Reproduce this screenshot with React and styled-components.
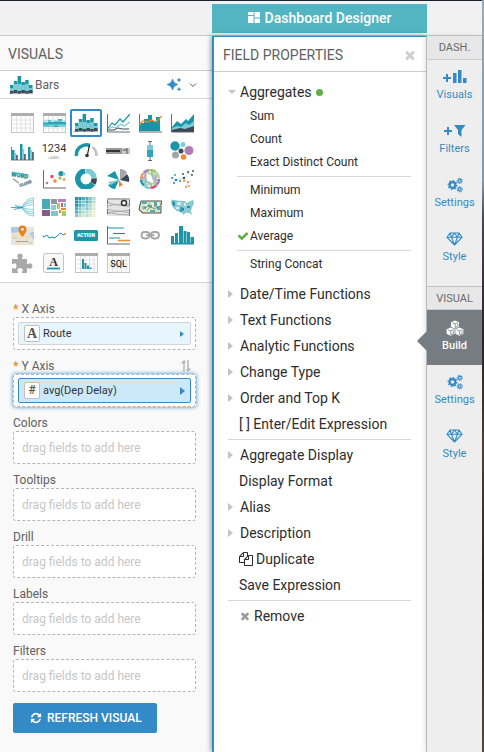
import React from "react";
import styled, { createGlobalStyle, css } from "styled-components";

const c = {
  blue: "#338ac6",
  teal: "#1b95a8",
  light: "#7ccbd5",
  dark: "#3c4853",
  orange: "#f08a24",
  grey: "#a5a5a5",
};

const GlobalStyle = createGlobalStyle`
  * { box-sizing: border-box; }
  body { margin: 0; font-family: Roboto, sans-serif; font-size: 14px; color: #333; background: #f9f9f9; }
  button { font: inherit; color: inherit; background: none; border: 0; padding: 0; cursor: pointer; }
  h2, h3, ul { margin: 0; padding: 0; font-weight: 400; list-style: none; }
  svg { display: block; flex: none; }
`;

const Page = styled.div`
  display: flex;
  min-height: 100vh;
`;
const Main = styled.div`
  flex: 1;
  min-width: 0;
  display: flex;
  flex-direction: column;
  border-top: 1px solid #1d2230;
`;
const PhotoEdge = styled.div`
  width: 2px;
  background: linear-gradient(#9da9ba, #8d9bb0 24%, #4b4a50 29%, #29262a 45%, #4d4139 60%, #2d2727 78%, #544a43);
`;
const TopBar = styled.header`
  display: flex;
  padding: 3px 55px 2px 212px;
  background: #f1f1f1;
  border-bottom: 1px solid #c7c7c7;
`;
const DesignerTab = styled.button`
  flex: 1;
  height: 29px;
  padding-bottom: 2px;
  display: flex;
  align-items: center;
  justify-content: center;
  gap: 4px;
  background: #52b5c1;
  color: #fff;
  font-size: 14px;
  font-weight: 500;
`;
const Columns = styled.div`
  flex: 1;
  display: flex;
`;

const Visuals = styled.section`
  width: 212px;
  background: #f9f9f9;
`;
const VisualsTitle = styled.h2`
  padding: 2px 8px 0;
  font-size: 14px;
  line-height: 32px;
  color: #606060;
  border-bottom: 1px solid #cdcdcd;
`;
const TypePicker = styled.button`
  width: 100%;
  height: 28px;
  padding: 0 15px 0 9px;
  display: flex;
  align-items: center;
  gap: 2px;
  background: #fff;
  border-bottom: 1px solid #d5d5d5;
  color: #606060;
  font-size: 12px;
`;
const TypeName = styled.span`
  flex: 1;
  text-align: left;
`;
const PickerIcons = styled.span`
  display: flex;
  align-items: center;
  gap: 7px;
`;
const TypeGrid = styled.div`
  display: grid;
  grid-template-columns: repeat(auto-fill, 32px);
  grid-auto-rows: 28px;
  padding: 10px 6px 5px;
  background: #fff;
  border-bottom: 1px solid #d5d5d5;
`;
const TypeButton = styled.button`
  display: flex;
  align-items: center;
  justify-content: center;
  ${(p) =>
    p.$selected &&
    css`
      box-shadow: inset 0 0 0 2px ${c.blue};
      border-radius: 2px;
    `}
`;

const Shelves = styled.div`
  display: flex;
  flex-direction: column;
  align-items: stretch;
  gap: 7px;
  padding: 17px 16px 18px 13px;
`;
const ShelfLabel = styled.h3`
  display: flex;
  align-items: center;
  gap: 3px;
  height: 17px;
  font-size: 12px;
  color: #606060;
`;
const Required = styled.span`
  color: ${c.orange};
  font-weight: 700;
`;
const SwapButton = styled.button`
  margin-left: auto;
  margin-right: 5px;
`;
const DropZone = styled.div`
  height: 33px;
  padding: 4px;
  display: flex;
  align-items: center;
  background: #fff;
  border: 1px dashed #b4b4b4;
  border-radius: 3px;
  font-size: 12px;
  color: #c6c6c6;
  ${(p) => p.$active && css`box-shadow: 0 0 4px ${c.blue};`}
`;
const Hint = styled.span`
  padding-left: 4px;
`;
const FieldChip = styled.button`
  flex: 1;
  height: ${(p) => (p.$active ? 25 : 23)}px;
  padding: 0 5px;
  display: flex;
  align-items: center;
  gap: 3px;
  text-align: left;
  font-size: 11px;
  color: #333;
  border: 1px solid ${(p) => (p.$active ? c.blue : "#cfd5d9")};
  border-radius: 2px;
  background: ${(p) => (p.$active ? "#cce9fa" : "#e7f5fe")};
`;
const FieldType = styled.span`
  width: 16px;
  height: 17px;
  border: 1px solid #bfbfbf;
  border-radius: 2px;
  background: #fff;
  color: #555;
  text-align: center;
  font: ${(p) => (p.$serif ? '700 14px/15px "Liberation Serif", serif' : "500 12px/15px Roboto, sans-serif")};
`;
const FieldName = styled.span`
  flex: 1;
`;
const RefreshButton = styled.button`
  align-self: flex-start;
  height: 30px;
  margin-top: 4px;
  padding: 0 15px 0 17px;
  display: flex;
  align-items: center;
  gap: 5px;
  border-radius: 2px;
  background: ${c.blue};
  color: #fff;
  font-size: 12px;
  font-weight: 500;
`;

const Properties = styled.section`
  flex: 1;
  min-width: 0;
  position: relative;
  background: #fff;
  border: solid ${c.blue};
  border-width: 1px 0 0 2px;
  box-shadow: -1px 0 5px rgba(0, 0, 0, 0.4);
`;
const PropertiesHeader = styled.header`
  height: 35px;
  padding: 2px 9px 0;
  display: flex;
  align-items: center;
  justify-content: space-between;
  border-bottom: 1px solid #cdcdcd;
  color: #606060;
`;
const PropertiesTitle = styled.h2`
  font-size: 14px;
`;
const PropertyList = styled.div`
  display: flex;
  flex-direction: column;
  padding: 7px 15px 0 14px;
`;
const PropertyRow = styled.button`
  height: 26px;
  padding-left: ${(p) => (p.$flush ? 11 : 0)}px;
  display: flex;
  align-items: center;
  gap: ${(p) => p.$gap || 4}px;
  text-align: left;
  font-size: 14px;
  color: #2d2d2d;
`;
const ArrowSlot = styled.span`
  width: 8px;
`;
const Dot = styled.span`
  width: 7px;
  height: 7px;
  border-radius: 50%;
  background: #62ac4a;
`;
const OptionGroup = styled.div`
  display: flex;
  flex-direction: column;
  padding-left: 9px;
  margin-bottom: 5px;
`;
const OptionRow = styled.button`
  height: 23px;
  padding-bottom: 2px;
  display: flex;
  align-items: center;
  gap: 2px;
  text-align: left;
  font-size: 12px;
  color: #2d2d2d;
`;
const CheckSlot = styled.span`
  width: 11px;
`;
const Divider = styled.hr`
  width: 100%;
  height: 1px;
  margin: 2px 0;
  border: 0;
  background: #d6d6d6;
`;

const Rail = styled.nav`
  width: 56px;
  border-left: 1px solid #b9b9b9;
  background: #eeeeee;
  box-shadow: -1px 0 5px rgba(0, 0, 0, 0.12);
  position: relative;
`;
const RailTitle = styled.h2`
  height: 24px;
  margin-top: ${(p) => (p.$spaced ? 10 : 0)}px;
  border-top: ${(p) => (p.$spaced ? "1px solid #c3c3c3" : "0")};
  border-bottom: 1px solid #cccccc;
  background: #e7e7e7;
  color: #6b6b6b;
  font-size: 11px;
  line-height: 23px;
  text-align: center;
`;
const RailButton = styled.button`
  width: 100%;
  height: ${(p) => (p.$selected ? 55 : 54)}px;
  padding-top: ${(p) => (p.$selected ? 10 : 9)}px;
  position: relative;
  display: flex;
  flex-direction: column;
  align-items: center;
  gap: 1px;
  font-size: 11px;
  line-height: 17px;
  color: ${c.blue};
  ${(p) =>
    p.$selected &&
    css`
      color: #fff;
      font-weight: 500;
      background: #757d83;
      &::before {
        content: "";
        position: absolute;
        right: 100%;
        top: 21px;
        border: solid transparent;
        border-width: 10px 10px 10px 0;
        border-right-color: #757d83;
      }
    `}
`;

/* ---------- Interface icons ---------- */

const glyphs = {
  times: "M1490 1322q0 40-28 68l-136 136q-28 28-68 28t-68-28l-294-294-294 294q-28 28-68 28t-68-28l-136-136q-28-28-28-68t28-68l294-294-294-294q-28-28-28-68t28-68l136-136q28-28 68-28t68 28l294 294 294-294q28-28 68-28t68 28l136 136q28 28 28 68t-28 68l-294 294 294 294q28 28 28 68z",
  check: "M1671 566q0 40-28 68l-724 724-136 136q-28 28-68 28t-68-28l-136-136-362-362q-28-28-28-68t28-68l136-136q28-28 68-28t68 28l294 295 656-657q28-28 68-28t68 28l136 136q28 28 28 68z",
  refresh: "M1639 1056q0 5-1 7-64 268-268 434.5t-478 166.5q-146 0-282.5-55t-243.5-157l-129 129q-19 19-45 19t-45-19-19-45v-448q0-26 19-45t45-19h448q26 0 45 19t19 45-19 45l-137 137q71 66 161 102t187 36q134 0 250-65t186-179q11-17 53-117 8-23 30-23h192q13 0 22.5 9.5t9.5 22.5zm25-800v448q0 26-19 45t-45 19h-448q-26 0-45-19t-19-45 19-45l138-138q-148-137-349-137-134 0-250 65t-186 179q-11 17-53 117-8 23-30 23h-199q-13 0-22.5-9.5t-9.5-22.5v-7q65-268 270-434.5t480-166.5q146 0 284 55.5t245 156.5l130-129q19-19 45-19t45 19 19 45z",
  copy: "M1696 384q40 0 68 28t28 68v1216q0 40-28 68t-68 28h-960q-40 0-68-28t-28-68v-288h-544q-40 0-68-28t-28-68v-672q0-40 20-88t48-76l408-408q28-28 76-48t88-20h416q40 0 68 28t28 68v328q68-40 128-40h416zm-544 213l-299 299h299v-299zm-640-384l-299 299h299v-299zm196 647l316-316v-416h-384v416q0 40-28 68t-68 28h-416v640h512v-256q0-40 20-88t48-76zm956 804v-1152h-384v416q0 40-28 68t-68 28h-416v640h896z",
};
const Glyph = ({ name, size, color = "currentColor" }) => (
  <svg width={size} height={size} viewBox="0 0 1792 1792" fill={color} aria-hidden="true">
    <path d={glyphs[name]} />
  </svg>
);
const Caret = ({ open }) => (
  <svg width="8" height="10" viewBox="0 0 8 10" fill="#c4c4c4" aria-hidden="true">
    <path d={open ? "M0 3h8L4 7z" : "M0 1l5 4-5 4z"} />
  </svg>
);
const ChipCaret = ({ active }) => (
  <svg width="5" height="10" viewBox="0 0 5 10" fill={c.blue} aria-hidden="true">
    <path d={active ? "M0 1l5 4-5 4z" : "M0 2l4 3-4 3z"} />
  </svg>
);
const DesignerIcon = () => (
  <svg width="13" height="13" viewBox="0 0 13 13" fill="#fff" aria-hidden="true">
    <path d="M0 1h5.500v3H0zM0 5h5.500v7H0zM6.500 1h5.500v5.500H6.500zM6.500 7.500h5.500V12H6.500z" />
  </svg>
);
const Sparkles = () => (
  <svg width="15" height="15" viewBox="0 0 15 15" fill={c.blue} aria-hidden="true">
    <path d="M5.500 2Q6.500 6.500 11 7.500 6.500 8.500 5.500 13 4.500 8.500 0 7.500 4.500 6.500 5.500 2z" stroke={c.blue} strokeWidth=".6" />
    <path d="M12 .4l.8 1.800 1.800.8-1.800.8-.8 1.800-.8-1.800-1.800-.8 1.800-.8zM12 9.800l.7 1.700 1.700.7-1.700.7-.7 1.700-.7-1.700-1.700-.7 1.700-.7z" />
  </svg>
);
const Chevron = () => (
  <svg width="8" height="6" viewBox="0 0 8 6" fill="none" stroke="#555" aria-hidden="true">
    <path d="M1 1.500l3 3 3-3" />
  </svg>
);
const SwapIcon = () => (
  <svg width="10" height="14" viewBox="0 0 10 14" fill="none" stroke="#b5b5b5" strokeWidth="1.500" aria-hidden="true">
    <path d="M3 13V2M.7 4.500L3 2l1.500 1.500M7 1v11M9.400 9.500L7 12l-1.500-1.500" />
  </svg>
);

const RailSvg = ({ children, w = 24 }) => (
  <svg width={w} height="16" viewBox={`0 0 ${w} 16`} fill="currentColor" aria-hidden="true">
    {children}
  </svg>
);
const Gear = ({ x, y, r, w }) => (
  <g fill="none" stroke="currentColor">
    <circle cx={x} cy={y} r={r} strokeWidth={w} />
    <circle cx={x} cy={y} r={r + w / 2 + 0.4} strokeWidth="1.200" pathLength="16" strokeDasharray="1 1" />
  </g>
);
const Cube = ({ x, y }) => (
  <g transform={`translate(${x} ${y})`}>
    <path d="M4 0l4 1.700v4.600L4 8.200 0 6.300V1.700z" />
    <path d="M1.200 2.200L4 3.400l2.800-1.200M4.200 3.500v3.800l2.600-1.300V3.200" fill="none" stroke="#757d83" strokeWidth=".8" />
  </g>
);
const railIcons = {
  visuals: (
    <RailSvg>
      <path d="M0 8h3V5h2v3h3v2H5v3H3v-3H0z" />
      <path d="M10 4h3.500v10H10zM15 1h3.500v13H15zM20 9h3.500v5H20z" />
    </RailSvg>
  ),
  filters: (
    <RailSvg w={22}>
      <path d="M0 7h3V4h2v3h3v2H5v3H3V9H0z" />
      <path d="M10 2h11.500L17.500 7v7L14 11V7z" />
    </RailSvg>
  ),
  settings: (
    <RailSvg w={16}>
      <Gear x={5.5} y={8} r={2.9} w={2.2} />
      <Gear x={12.7} y={3.8} r={1.5} w={1.2} />
      <Gear x={12.7} y={12.3} r={1.5} w={1.2} />
    </RailSvg>
  ),
  style: (
    <RailSvg w={17}>
      <path
        d="M4 2h9l3 4.300L8.500 14 1 6.300zM1 6.300h15M4 2l1.500 4.300 3 7.700 3-7.700L13 2M5.500 6.300L8.500 2l3 4.300"
        fill="none"
        stroke="currentColor"
        strokeWidth="1.100"
        strokeLinejoin="round"
      />
    </RailSvg>
  ),
  build: (
    <RailSvg w={18}>
      <Cube x={5} y={0.5} />
      <Cube x={0.6} y={7.5} />
      <Cube x={9.4} y={7.5} />
    </RailSvg>
  ),
};

/* ---------- Chart type thumbnails, each on a 24x20 canvas ---------- */

const Axis = () => <path d="M1.500 1v18H24" fill="none" stroke="#555c63" strokeWidth=".9" />;
const TableFrame = () => (
  <>
    <rect x="1.500" y=".5" width="22" height="19" fill="#fff" stroke="#c4c4c4" />
    <path d="M1 0h23v3H1z" fill="#adadad" />
    <path d="M1 7h23M1 11h23M1 15h23M6.500 3v17M11 3v17M15.500 3v17M20 3v17" stroke="#dcdcdc" strokeWidth=".8" />
  </>
);
const Bars = () => (
  <>
    {[9, 5, 0, 6, 4, 9].map((y, i) => (
      <g key={i} transform={`translate(${1 + i * 3.8} 0)`}>
        <path d={`M0 ${y + 1}h3.500V18H0z`} fill={c.teal} />
        <path d={`M0 ${Math.max(y + 4, 9)}h3.500V18H0z`} fill={c.light} />
        <path d={`M0 ${i % 2 ? 15 : 16}h3.500v3H0z`} fill={c.dark} />
      </g>
    ))}
    <path d="M0 18.600h24" stroke="#8b9298" strokeWidth=".8" />
  </>
);
const polar = (r, deg) => {
  const a = ((deg - 90) * Math.PI) / 180;
  return `${(12 + r * Math.cos(a)).toFixed(2)} ${(10 + r * Math.sin(a)).toFixed(2)}`;
};
const arc = (r, a, b) => `M${polar(r, a)}A${r} ${r} 0 ${b - a > 180 ? 1 : 0} 1 ${polar(r, b)}`;
const dots = (list) => list.map(([x, y, r, fill], i) => <circle key={i} cx={x} cy={y} r={r} fill={fill} />);

const chartTypes = [
  ["Table", <TableFrame />],
  [
    "Cross tab",
    <>
      <TableFrame />
      <path d="M1 9h23v5H1z" fill={c.light} />
      <path d="M6 7h3v2h3V8h4V6h4v3h4v3h-8v2h-4v-2H7v1H1v-3h5z" fill={c.teal} opacity=".75" />
      <path d="M1 8h23M1 12h23" stroke="#73dbe6" />
    </>,
  ],
  ["Bars", <Bars />],
  [
    "Lines",
    <>
      <Axis />
      <g fill="none">
        <path d="M2 15l4-5 3 2 5-6 3 3 7-8" stroke={c.teal} strokeWidth="1.200" />
        <path d="M2 16l4-2 4 1 5-4 3 2 6-4" stroke={c.light} strokeWidth="1.200" />
        <path d="M2 17h6l4-2 4 1h7" stroke={c.dark} />
      </g>
    </>,
  ],
  [
    "Combo",
    <>
      <path d="M2 10h4v8H2zM6 6h4v12H6zM10 2h4v16h-4zM14 8h4v10h-4zM18 4h4v14h-4z" fill={c.teal} />
      <path d="M6 10v8M10 6v12M14 8v10M18 8v10" stroke="#167d8f" strokeWidth=".5" />
      <Axis />
      <path d="M1 12l4-4 4 1 5-2 4 2 6-6" fill="none" stroke={c.orange} strokeWidth="1.200" />
    </>,
  ],
  [
    "Area",
    <>
      <path d="M2 14l5-6 4 3 5-5 2 2 6-7v17H2z" fill={c.teal} />
      <path d="M2 15l5-2 4 1 5-4 3 2 5-4v10H2z" fill={c.light} />
      <path d="M2 17l8-2 5 1 9-3v6H2z" fill={c.dark} />
      <Axis />
    </>,
  ],
  [
    "Grouped bars",
    <>
      <path d="M2 9h2.500v10H2zM10 3h2.500v16H10zM18 6h2.500v13H18z" fill={c.teal} />
      <path d="M4.500 12h1.700v7H4.500zM12.500 8h1.700v11h-1.700zM20.500 9h1.700v10h-1.700z" fill={c.light} />
      <path d="M6.200 14h1.500v5H6.200zM14.200 13h1.500v6h-1.500zM22.200 11h1.500v8h-1.500z" fill={c.dark} />
      <path d="M1 19h23M1.500 6v13" stroke="#555c63" strokeWidth=".8" />
    </>,
  ],
  [
    "KPI",
    <>
      <text x="12" y="11" textAnchor="middle" fontSize="11" fill="#333">1234</text>
      <text x="12" y="18" textAnchor="middle" fontSize="4" fill="#999">LABEL</text>
    </>,
  ],
  [
    "Gauge",
    <>
      <path d="M2.500 15A10 10 0 0 1 16 4.500" fill="none" stroke={c.teal} strokeWidth="3.500" />
      <path d="M18.500 6Q22.500 9 22.500 15" fill="none" stroke="#c4c4c4" strokeWidth="2.800" />
      <path d="M15.500 4l-2.300 11" stroke="#222" strokeWidth="1.200" />
      <circle cx="13" cy="14.500" r="1.800" fill="#333" />
    </>,
  ],
  [
    "Bullet",
    <>
      <path d="M0 7h24v6H0z" fill="#c9c9c9" />
      <path d="M0 7h16v6H0z" fill="#999" />
      <path d="M0 9h14v2H0z" fill="#333" />
      <path d="M17 9h4M21 7v6" stroke="#555" />
    </>,
  ],
  [
    "Box plot",
    <>
      <path d="M12 0v20M10 .5h4M10 19.500h4" stroke="#666" />
      <path d="M9 4h6v5H9z" fill={c.light} />
      <path d="M9 9h6v7H9z" fill="#2ba7b6" />
    </>,
  ],
  ["Packed bubbles", dots([[5, 5, 4.7, c.teal], [13, 3.5, 2.5, c.light], [19, 9.5, 4.5, "#b27bb8"], [5.5, 14, 3.5, "#a0a6aa"], [11, 10, 2.5, c.dark], [13.5, 16, 2.8, c.orange]])],
  [
    "Word cloud",
    <g fontWeight="900">
      <text x="1" y="7" fontSize="6" fill={c.teal} stroke={c.teal} strokeWidth=".3" transform="rotate(9 1 7)">WORD</text>
      <text x="10" y="18" fontSize="4" fill="#6b8792" stroke="#6b8792" strokeWidth=".3" transform="rotate(-20 10 18)">CLOUD</text>
      <path d="M3 10l6 4" stroke="#999" strokeWidth="1.500" />
    </g>,
  ],
  ["Scatter", <><Axis />{dots([[5, 14, 1.3, "#b27bb8"], [10, 7.5, 1.8, "#e2516a"], [13, 12, 1.7, c.orange], [19, 4.5, 2.6, c.teal], [18, 9, 1.7, "#9dc65c"], [22, 10.5, 1.2, c.orange], [22, 5, 1.5, c.light]])}</>],
  [
    "Donut",
    <g fill="none" strokeWidth="5.500">
      <path d={arc(8.2, 125, 355)} stroke={c.teal} />
      <path d={arc(8.2, 0, 83)} stroke={c.light} />
      <path d={arc(8.2, 86, 122)} stroke={c.dark} />
    </g>,
  ],
  [
    "Radial",
    <>
      <path d="M13 11L1 7l8-5z" fill={c.teal} />
      <path d="M13 11L9 20q-4 0-7-4z" fill={c.teal} />
      <path d="M14 11V0q5 0 7 4z" fill="#a0a6aa" />
      <path d="M14 11l7-6q3 4 2 8z" fill={c.dark} />
      <path d="M13 11l4 5-4 2z" fill={c.orange} />
      <path d="M13 11L5 16l-3-3z" fill={c.light} />
    </>,
  ],
  [
    "Chord",
    <>
      <path d="M6 4q4 6 0 12M9 2q3 5 9 3M18 5q-5 5 0 10M8 17q5-5 10-1" fill="none" stroke="#bcd59a" strokeWidth="2" />
      <path d="M4 8q6 2 3 8M14 2q-1 9 6 9M5 12q7 0 9 6" fill="none" stroke="#8fc3cc" strokeWidth="2" />
      <path d="M8 3q-1 7-4 7M19 6q-3 4-1 9" fill="none" stroke="#c5a5bd" strokeWidth="2" />
      <g fill="none" strokeWidth="2.500">
        {["#9dc65c", "#bcd59a", "#9b7fb5", "#e2516a", c.light, c.teal, "#e69a6a", "#a58cba"].map((s, i) => (
          <path key={i} d={arc(9, i * 45, i * 45 + 42)} stroke={s} />
        ))}
      </g>
    </>,
  ],
  [
    "Network",
    <>
      <path d="M6 11l8-2M14 9l4-5M14 9l4 5-2 4M2 8l4 3-3 2M18 4l4 2M18 14l3-2" stroke="#bbb" strokeWidth=".6" fill="none" />
      {dots([[2, 9, 1, c.teal], [4, 14, 1, c.teal], [6, 11, 1.3, c.teal], [10, 12, 1, c.teal], [5, 6, 0.9, c.teal], [14, 9, 1.2, c.dark], [13, 5, 0.9, c.dark], [18, 3, 1, c.dark], [23, 2, 0.9, c.dark], [22, 6, 0.9, c.dark], [14, 12, 1.1, c.orange], [18, 13, 1, c.orange], [16, 18, 1, c.orange], [19, 17, 0.9, c.orange]])}
    </>,
  ],
  [
    "Dendrogram",
    <g fill="none">
      {[1, 3, 5, 7.5, 12.5, 15, 17, 19].map((y) => (
        <path key={y} d={`M12 10.500Q16 ${y} 24 ${y}`} stroke={c.light} strokeWidth=".9" />
      ))}
      <path d="M1 10.500h12M5 8.500l8 2-9 2" stroke={c.teal} strokeWidth=".8" />
      <path d="M23.500 1v18" stroke="#a0c7cd" strokeWidth=".8" />
    </g>,
  ],
  [
    "Treemap",
    <>
      <path d="M0 2h8v10H0z" fill="#4aa9b7" />
      <path d="M9 2h6v5H9z" fill="#8f969d" />
      <path d="M16 2h8v3h-8z" fill="#b681bd" />
      <path d="M0 13h8v6H0z" fill="#805d8a" />
      <path d="M9 8h5v5H9z" fill="#8ecbd3" />
      <path d="M15 6h3v6h-3zM20 14h4v5h-4z" fill="#abc96c" />
      <path d="M19 6h2v4h-2z" fill="#e2516a" />
      <path d="M9 14h7v5H9zM22 6h2v4h-2z" fill="#7ec6cf" />
      <path d="M19 11h5v2h-5zM17 13h2v3h-2z" fill={c.orange} />
    </>,
  ],
  [
    "Heatmap",
    <>
      {Array.from({ length: 36 }, (_, i) => {
        const x = i % 6;
        const y = Math.floor(i / 6);
        const shades = ["#1b95a8", "#4ab0ba", "#84c8cb", "#b3dcd2", "#d9ebcb", "#eef0cd"];
        const shade = Math.min(5, Math.max(0, Math.floor((x + y) / 2 + ((i * 7) % 3) / 2 - 0.5)));
        return <rect key={i} x={1 + x * 3.5} y={y * 3.4} width="3.100" height="3" fill={shades[shade]} />;
      })}
    </>,
  ],
  [
    "Flow",
    <>
      <path d="M1 1h23v18H1z" fill="#e4e4e4" />
      <path d="M1 1h23v2H1z" fill="#b4b4b4" />
      <path d="M1 5q8 4 23 3M1 9q10-3 23 1M1 12q10 4 23 1M1 17q10-5 23-1M1 15q10 3 23 3" fill="none" stroke="#aaa" />
      <circle cx="18" cy="6" r="2.500" fill="#fff" stroke="#333" strokeWidth="1.500" />
      <path d="M1.500 3v4M1.500 12v5M23.500 3v6M23.500 12v7" stroke={c.teal} />
      <path d="M1.500 8v3" stroke={c.orange} />
    </>,
  ],
  [
    "Choropleth",
    <>
      <path d="M3 4h21v2h-1v10H4l-1-2-2-1 1-5z" fill="#d8e8ca" stroke="#222" strokeWidth=".8" />
      <path d="M4 5h5v2H4zM10 8h4v2h-4zM16 5h3v4h-3zM12 13h5v2h-5zM4 12l4-3v3zM19 9h3v4h-3z" fill="#55aab2" />
      <path d="M7 7h3v3H7zM14 6h2v4h-2zM19 5h2v3h-2zM10 12h2v3h-2z" fill="#f6f1c7" />
      <path d="M4 10h5l3-4M9 14l3-4 6 2M16 9l4 2" fill="none" stroke="#2f5a5e" strokeWidth=".6" />
    </>,
  ],
  [
    "US map",
    <>
      <path d="M2 3l6 1 7 .5 2 2 3-2 3-1 .5 3-2 4-1 4 1 3-2-2-4 0-2 2-2-3-5-1-3-3-2-4z" fill="#8ccbd2" stroke="#5caab5" strokeWidth=".5" />
      <path d="M2 4l3 1v4L3 9zM10 10l4 1v3l-3-1zM17 9h3v2h-3zM9 13h3l-1 3z" fill={c.teal} />
      <path d="M7 5h4v3H7zM14 6h2v3h-2zM6 10h3v2H6z" fill="#d4ecef" />
    </>,
  ],
  [
    "Map",
    <>
      <path d="M1 2h23v18H1z" fill="#e9e4dc" />
      <path d="M1 2h13l-5 5-8 1zM19 8l5-1v8z" fill="#a9c9ee" />
      <path d="M1 12l8-3 10 3 5-2M8 20l3-12M15 20l3-9" stroke="#f8d681" strokeWidth=".8" fill="none" />
      <path d="M3 12h4v2H3zM19 17h3v2h-3z" fill="#c7dfb3" />
      <path d="M12.500 12C9.500 8 8.500 7 8.500 4.500a4 4 0 0 1 8 0C16.500 7 15.500 8 12.500 12z" fill="#ef7f1a" />
      <circle cx="12.500" cy="4.300" r="1.400" fill="#fff" />
      <text x="12" y="17" textAnchor="middle" fontSize="2" fill="#333">San Francisco</text>
    </>,
  ],
  [
    "Sparkline",
    <>
      <path d="M2 12l3-2 2 3 3-1 3 1 3-3 3-2 2 2 2-1" fill="none" stroke={c.teal} />
      {dots([[1.5, 11.5, 0.9, "#62ac4a"], [23, 9, 0.9, c.orange]])}
    </>,
  ],
  [
    "Action",
    <>
      <rect y="5" width="24" height="11" rx="1.500" fill="#1d96a6" />
      <text x="12" y="12" textAnchor="middle" fontSize="5" fontWeight="900" fill="#fff">ACTION</text>
    </>,
  ],
  [
    "Gantt",
    <>
      <Axis />
      <path d="M2 3h16M3 13h11" stroke={c.teal} strokeWidth="1.100" />
      <path d="M7 8.500h12" stroke="#55737b" strokeWidth="1.100" />
      <path d="M12 15.500h12" stroke={c.orange} strokeWidth="1.500" />
    </>,
  ],
  [
    "Link",
    <g fill="none" stroke="#a5a5a5" strokeWidth="1.800">
      <rect x="3.500" y="7" width="8" height="6.500" rx="3.200" />
      <rect x="13" y="7" width="8" height="6.500" rx="3.200" />
      <path d="M8 10.200h8.500" />
    </g>,
  ],
  ["Histogram", <path d="M1 11h3v8H1zM5 8h3v11H5zM9 1h4v18H9zM13.500 6h3v13h-3zM17 7h3v12h-3zM20.500 12h3.500v7h-3.500zM1 18h23v1.500H1z" fill={c.teal} />],
  [
    "Extension",
    <path
      d="M2 6h5.500c1 0 .5-1.200 0-2C6.800 2.500 8 .5 10 .5s3.200 2 2.500 3.500c-.5.800-1 2 0 2H17v4.500c0 1 1.200.5 2 0 1.500-.7 3.500.500 3.500 2.500s-2 3.200-3.500 2.500c-.8-.5-2-1-2 0V20h-4.500c-1 0-.5-1.200 0-2 .7-1.500-.5-3-2.500-3s-3.200 1.500-2.500 3c.5.800 1 2 0 2H2v-4.500c0-1 1.200-.5 2 0 1.500.7 2.500-.5 2.500-2.500S5.500 9.800 4 10.500c-.8.500-2 1-2 0z"
      fill="#a9a9a9"
    />,
  ],
  [
    "Rich text",
    <>
      <rect x="1.500" y=".5" width="20" height="19" rx="2" fill="#f8f8f8" stroke="#c4c4c4" />
      <text x="11.500" y="12.500" textAnchor="middle" fontSize="12" fontWeight="700" fontFamily="Liberation Serif, serif" fill="#333">A</text>
      <path d="M5 15.500h13" stroke={c.teal} strokeWidth="1.800" />
    </>,
  ],
  [
    "Table histogram",
    <>
      <TableFrame />
      <path d="M8 6h2v10H8zM10.500 10h2v6h-2zM13 12.500h2V16h-2zM15.500 14.500h2V16h-2z" fill={c.teal} />
    </>,
  ],
  [
    "SQL",
    <>
      <TableFrame />
      <text x="12.500" y="14" textAnchor="middle" fontSize="9" fontWeight="500" fill="#333">SQL</text>
    </>,
  ],
];

const Thumb = ({ children }) => (
  <svg width="24" height="20" viewBox="0 0 24 20" aria-hidden="true">
    {children}
  </svg>
);

const Shelf = ({ label, required, action, active, field, type }) => (
  <div>
    <ShelfLabel>
      {required && <Required>*</Required>}
      {label}
      {action}
    </ShelfLabel>
    <DropZone $active={active}>
      {field ? (
        <FieldChip $active={active}>
          <FieldType $serif={type === "A"}>{type}</FieldType>
          <FieldName>{field}</FieldName>
          <ChipCaret active={active} />
        </FieldChip>
      ) : (
        <Hint>drag fields to add here</Hint>
      )}
    </DropZone>
  </div>
);

const Property = ({ label, open, children }) => (
  <PropertyRow aria-expanded={Boolean(open)}>
    <ArrowSlot>
      <Caret open={open} />
    </ArrowSlot>
    {label}
    {children}
  </PropertyRow>
);
const Option = ({ label, checked }) => (
  <OptionRow aria-pressed={Boolean(checked)}>
    <CheckSlot>{checked && <Glyph name="check" size={12} color="#62ac4a" />}</CheckSlot>
    {label}
  </OptionRow>
);
const RailItem = ({ icon, label, selected }) => (
  <RailButton $selected={selected}>
    {railIcons[icon]}
    {label}
  </RailButton>
);

export default function App() {
  return (
    <Page>
      <GlobalStyle />
      <Main>
        <TopBar>
          <DesignerTab>
            <DesignerIcon />
            Dashboard Designer
          </DesignerTab>
        </TopBar>
        <Columns>
          <Visuals>
            <VisualsTitle>VISUALS</VisualsTitle>
            <TypePicker>
              <Thumb><Bars /></Thumb>
              <TypeName>Bars</TypeName>
              <PickerIcons>
                <Sparkles />
                <Chevron />
              </PickerIcons>
            </TypePicker>
            <TypeGrid>
              {chartTypes.map(([name, art]) => (
                <TypeButton key={name} aria-label={name} $selected={name === "Bars"}>
                  <Thumb>{art}</Thumb>
                </TypeButton>
              ))}
            </TypeGrid>
            <Shelves>
              <Shelf label="X Axis" required field="Route" type="A" />
              <Shelf
                label="Y Axis"
                required
                active
                field="avg(Dep Delay)"
                type="#"
                action={<SwapButton aria-label="Swap axes"><SwapIcon /></SwapButton>}
              />
              {["Colors", "Tooltips", "Drill", "Labels", "Filters"].map((label) => (
                <Shelf key={label} label={label} />
              ))}
              <RefreshButton>
                <Glyph name="refresh" size={12} />
                REFRESH VISUAL
              </RefreshButton>
            </Shelves>
          </Visuals>

          <Properties>
            <PropertiesHeader>
              <PropertiesTitle>FIELD PROPERTIES</PropertiesTitle>
              <button aria-label="Close"><Glyph name="times" size={14} color="#d0d0d0" /></button>
            </PropertiesHeader>
            <PropertyList>
              <Property label="Aggregates" open><Dot /></Property>
              <OptionGroup>
                <Option label="Sum" />
                <Option label="Count" />
                <Option label="Exact Distinct Count" />
                <Divider />
                <Option label="Minimum" />
                <Option label="Maximum" />
                <Option label="Average" checked />
                <Divider />
                <Option label="String Concat" />
              </OptionGroup>
              <Property label="Date/Time Functions" />
              <Property label="Text Functions" />
              <Property label="Analytic Functions" />
              <Property label="Change Type" />
              <Property label="Order and Top K" />
              <PropertyRow $flush>[ ] Enter/Edit Expression</PropertyRow>
              <Divider />
              <Property label="Aggregate Display" />
              <PropertyRow $flush>Display Format</PropertyRow>
              <Property label="Alias" />
              <Property label="Description" />
              <PropertyRow $flush $gap={3}>
                <Glyph name="copy" size={14} />
                Duplicate
              </PropertyRow>
              <PropertyRow $flush>Save Expression</PropertyRow>
              <Divider />
              <PropertyRow $flush $gap={3}>
                <Glyph name="times" size={12} color="#9a9a9a" />
                Remove
              </PropertyRow>
            </PropertyList>
          </Properties>

          <Rail>
            <RailTitle>DASH.</RailTitle>
            <RailItem icon="visuals" label="Visuals" />
            <RailItem icon="filters" label="Filters" />
            <RailItem icon="settings" label="Settings" />
            <RailItem icon="style" label="Style" />
            <RailTitle $spaced>VISUAL</RailTitle>
            <RailItem icon="build" label="Build" selected />
            <RailItem icon="settings" label="Settings" />
            <RailItem icon="style" label="Style" />
          </Rail>
        </Columns>
      </Main>
      <PhotoEdge />
    </Page>
  );
}
